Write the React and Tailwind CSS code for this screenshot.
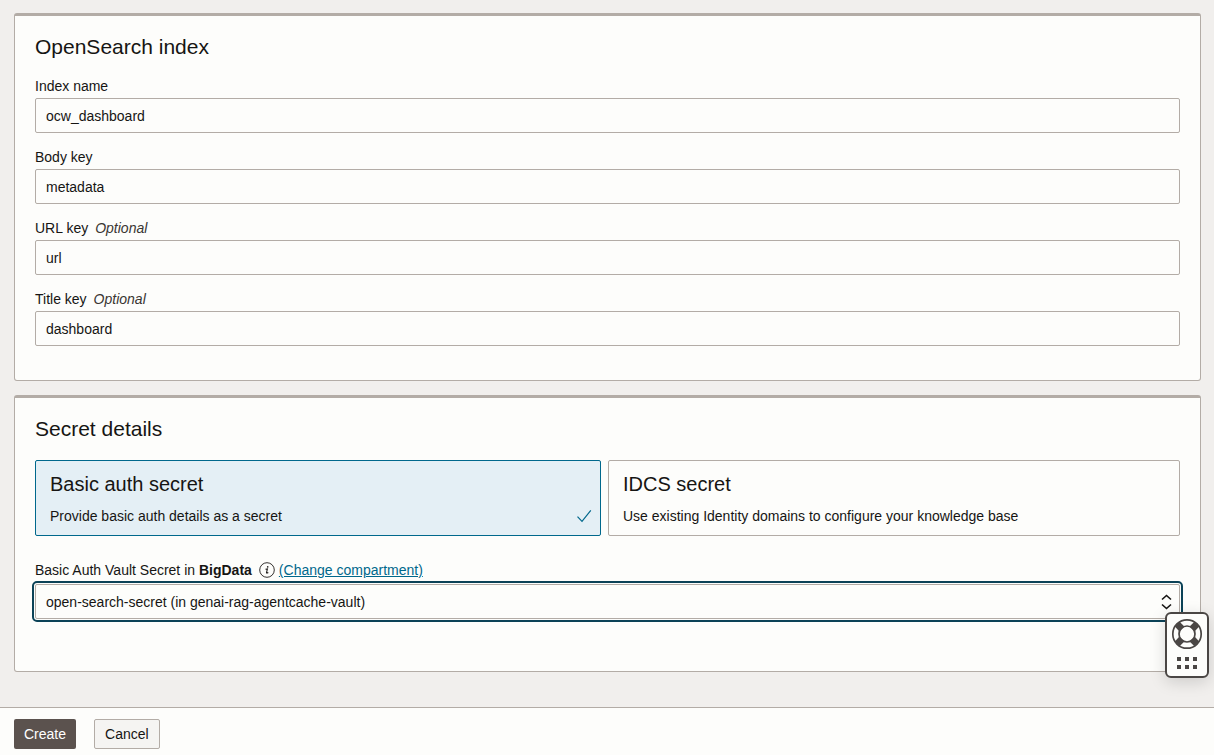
import { useState } from "react";

const fields = [
  { id: "index-name", label: "Index name", value: "ocw_dashboard" },
  { id: "body-key", label: "Body key", value: "metadata" },
  { id: "url-key", label: "URL key", value: "url", optional: true },
  { id: "title-key", label: "Title key", value: "dashboard", optional: true },
];

const secretTypes = [
  {
    id: "basic",
    title: "Basic auth secret",
    description: "Provide basic auth details as a secret",
  },
  {
    id: "idcs",
    title: "IDCS secret",
    description: "Use existing Identity domains to configure your knowledge base",
  },
];

function Panel({ title, className, children }) {
  return (
    <section
      className={`rounded-[3px] border border-t-3 border-[#b3aca6] bg-[#fdfdfb] px-5 pt-[17px] ${className}`}
    >
      <h2 className="text-[21px] leading-7">{title}</h2>
      {children}
    </section>
  );
}

function TextField({ id, label, value, optional }) {
  return (
    <div className="flex flex-col gap-0.5">
      <label htmlFor={id} className="flex gap-[7px] text-sm leading-5">
        {label}
        {optional && <em className="text-[#3a3632]">Optional</em>}
      </label>
      <input
        id={id}
        type="text"
        defaultValue={value}
        className="h-[35px] w-full rounded-xs border border-[#b3aca6] bg-[#fdfdfb] px-2.5 text-sm"
      />
    </div>
  );
}

function SecretTile({ type, selected, onSelect }) {
  return (
    <label
      className={`flex cursor-pointer items-end justify-between rounded-xs border px-3.5 py-[9px] ${
        selected ? "border-[#00688c] bg-[#e4eff5]" : "border-[#b3aca6] bg-[#fdfdfb]"
      }`}
    >
      <input
        type="radio"
        name="secret-type"
        className="sr-only"
        checked={selected}
        onChange={onSelect}
      />
      <span className="flex flex-col gap-2">
        <span className="text-xl leading-7">{type.title}</span>
        <span className="text-sm leading-5">{type.description}</span>
      </span>
      {selected && (
        <svg
          className="-mr-1.5 mb-0.5 h-4 w-4"
          viewBox="0 0 16 16"
          fill="none"
          stroke="#00688c"
          strokeWidth="1.2"
          aria-hidden="true"
        >
          <path d="M1.500 8.600 6 13.400 14.800 2.400" />
        </svg>
      )}
    </label>
  );
}

function InfoIcon() {
  return (
    <svg className="h-4 w-4" viewBox="0 0 16 16" fill="none" aria-hidden="true">
      <circle cx="8" cy="8" r="7.3" stroke="#1f1c1a" strokeWidth="0.9" />
      <circle cx="8.7" cy="4.9" r="0.8" fill="#1f1c1a" />
      <path
        d="M6.500 7.300 8.400 6.900 7.500 10.700Q7.500 11.500 9.300 10.500"
        stroke="#1f1c1a"
        strokeWidth="1.1"
      />
    </svg>
  );
}

function LifebuoyIcon() {
  return (
    <svg className="h-8 w-8" viewBox="0 0 32 32" fill="none" aria-hidden="true">
      <circle cx="16" cy="16" r="14.2" stroke="#4a4644" strokeWidth="1.7" />
      <circle cx="16" cy="16" r="8" stroke="#4a4644" strokeWidth="1.7" />
      <path
        d="M3.800 8.600 8.600 3.800 13.400 8.400 8.400 13.400ZM23.400 3.800 28.200 8.600 23.600 13.400 18.600 8.400ZM28.200 23.400 23.400 28.200 18.600 23.600 23.600 18.600ZM8.600 28.200 3.800 23.400 8.400 18.600 13.400 23.600Z"
        fill="#4a4644"
      />
    </svg>
  );
}

function GripIcon() {
  return (
    <svg className="h-3 w-5" viewBox="0 0 20 12" fill="#4a4644" aria-hidden="true">
      <path d="M0 0h4v4H0zM8 0h4v4H8zM16 0h4v4h-4zM0 8h4v4H0zM8 8h4v4H8zM16 8h4v4h-4z" />
    </svg>
  );
}

export default function App() {
  const [secretType, setSecretType] = useState("basic");

  return (
    <div className="flex min-h-screen flex-col bg-[#f1efed] font-['Liberation_Sans',Arial,sans-serif] text-sm text-[#161513]">
      <main className="flex grow flex-col gap-3.5 pt-[13px] pr-[13px] pb-[35px] pl-3.5">
        <Panel title="OpenSearch index" className="pb-[34px]">
          <div className="mt-[15px] flex flex-col gap-3.5">
            {fields.map((field) => (
              <TextField key={field.id} {...field} />
            ))}
          </div>
        </Panel>

        <Panel title="Secret details" className="pb-[52px]">
          <div className="mt-[17px] grid grid-cols-[566fr_572fr] gap-[7px]">
            {secretTypes.map((type) => (
              <SecretTile
                key={type.id}
                type={type}
                selected={secretType === type.id}
                onSelect={() => setSecretType(type.id)}
              />
            ))}
          </div>

          <div className="mt-6 flex items-center leading-5">
            <label htmlFor="vault-secret" className="text-sm">
              Basic Auth Vault Secret in <strong>BigData</strong>
            </label>
            <button type="button" aria-label="More information" className="ml-[7px]">
              <InfoIcon />
            </button>
            <a href="#compartment" className="ml-1 text-[#00688c] underline">
              (Change compartment)
            </a>
          </div>
          <div className="relative mt-1">
            <select
              id="vault-secret"
              className="block h-[35px] w-full appearance-none rounded-xs border border-[#b3aca6] bg-[#fdfdfb] px-2.5 text-sm outline-2 outline-offset-1 outline-[#0b4257]"
            >
              <option>open-search-secret (in genai-rag-agentcache-vault)</option>
            </select>
            <svg
              className="pointer-events-none absolute top-2.5 right-2 h-4 w-3"
              viewBox="0 0 12 16"
              fill="none"
              stroke="#161513"
              strokeWidth="1.6"
              aria-hidden="true"
            >
              <path d="M2 5.500 6.500 1.500l4.500 4M2 10.500l4.500 4 4.500-4" />
            </svg>
          </div>
        </Panel>
      </main>

      <footer className="flex gap-[18px] border-t border-[#b3aca6] bg-[#fdfdfb] px-3.5 pt-[11px] pb-1.5">
        <button
          type="button"
          className="h-[30px] rounded-xs bg-[#5b524e] px-2.5 text-white"
        >
          Create
        </button>
        <button
          type="button"
          className="h-[30px] rounded-xs border border-[#b3aca6] bg-[#f5f4f2] px-2.5"
        >
          Cancel
        </button>
      </footer>

      <button
        type="button"
        aria-label="Help"
        className="fixed right-[5px] bottom-[77px] flex h-[66px] w-11 flex-col items-center gap-[7px] rounded-md border-2 border-[#4a4644] bg-[#fdfdfb] pt-1 shadow-[0_4px_16px_rgba(0,0,0,0.15)]"
      >
        <LifebuoyIcon />
        <GripIcon />
      </button>
    </div>
  );
}
